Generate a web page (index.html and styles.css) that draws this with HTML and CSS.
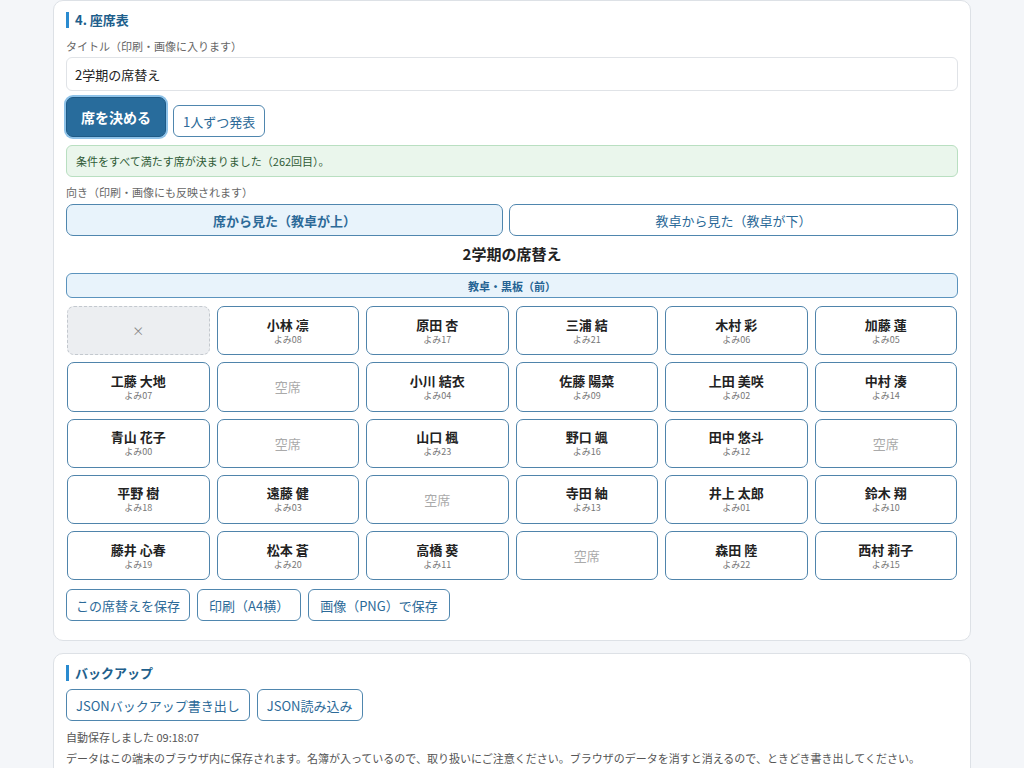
FILE: index.html
```html
<!DOCTYPE html>
<html lang="ja">
<head>
<meta charset="utf-8">
<title>座席表</title>
<link rel="stylesheet" href="styles.css">
</head>
<body>
<main class="page">
  <section class="card">
    <h2 class="sec-title">4. 座席表</h2>
    <label class="field-label title-label">タイトル（印刷・画像に入ります）</label>
    <input class="text-input" type="text" value="2学期の席替え">
    <div class="btn-row main-actions">
      <button class="btn btn-primary">席を決める</button>
      <button class="btn">1人ずつ発表</button>
    </div>
    <div class="alert-ok">条件をすべて満たす席が決まりました（262回目）。</div>
    <div class="field-label orient-label">向き（印刷・画像にも反映されます）</div>
    <div class="toggle">
      <button class="toggle-btn active">席から見た（教卓が上）</button>
      <button class="toggle-btn">教卓から見た（教卓が下）</button>
    </div>
    <h3 class="chart-title">2学期の席替え</h3>
    <div class="desk">教卓・黒板（前）</div>
    <div class="grid">
      <div class="seat blocked">×</div>
      <div class="seat"><span class="nm">小林 凛</span><span class="yo">よみ08</span></div>
      <div class="seat"><span class="nm">原田 杏</span><span class="yo">よみ17</span></div>
      <div class="seat"><span class="nm">三浦 結</span><span class="yo">よみ21</span></div>
      <div class="seat"><span class="nm">木村 彩</span><span class="yo">よみ06</span></div>
      <div class="seat"><span class="nm">加藤 蓮</span><span class="yo">よみ05</span></div>

      <div class="seat"><span class="nm">工藤 大地</span><span class="yo">よみ07</span></div>
      <div class="seat empty">空席</div>
      <div class="seat"><span class="nm">小川 結衣</span><span class="yo">よみ04</span></div>
      <div class="seat"><span class="nm">佐藤 陽菜</span><span class="yo">よみ09</span></div>
      <div class="seat"><span class="nm">上田 美咲</span><span class="yo">よみ02</span></div>
      <div class="seat"><span class="nm">中村 湊</span><span class="yo">よみ14</span></div>

      <div class="seat"><span class="nm">青山 花子</span><span class="yo">よみ00</span></div>
      <div class="seat empty">空席</div>
      <div class="seat"><span class="nm">山口 楓</span><span class="yo">よみ23</span></div>
      <div class="seat"><span class="nm">野口 颯</span><span class="yo">よみ16</span></div>
      <div class="seat"><span class="nm">田中 悠斗</span><span class="yo">よみ12</span></div>
      <div class="seat empty">空席</div>

      <div class="seat"><span class="nm">平野 樹</span><span class="yo">よみ18</span></div>
      <div class="seat"><span class="nm">遠藤 健</span><span class="yo">よみ03</span></div>
      <div class="seat empty">空席</div>
      <div class="seat"><span class="nm">寺田 紬</span><span class="yo">よみ13</span></div>
      <div class="seat"><span class="nm">井上 太郎</span><span class="yo">よみ01</span></div>
      <div class="seat"><span class="nm">鈴木 翔</span><span class="yo">よみ10</span></div>

      <div class="seat"><span class="nm">藤井 心春</span><span class="yo">よみ19</span></div>
      <div class="seat"><span class="nm">松本 蒼</span><span class="yo">よみ20</span></div>
      <div class="seat"><span class="nm">高橋 葵</span><span class="yo">よみ11</span></div>
      <div class="seat empty">空席</div>
      <div class="seat"><span class="nm">森田 陸</span><span class="yo">よみ22</span></div>
      <div class="seat"><span class="nm">西村 莉子</span><span class="yo">よみ15</span></div>
    </div>
    <div class="btn-row bottom-actions">
      <button class="btn">この席替えを保存</button>
      <button class="btn btn-wide">印刷（A4横）</button>
      <button class="btn btn-wide">画像（PNG）で保存</button>
    </div>
  </section>

  <section class="card">
    <h2 class="sec-title">バックアップ</h2>
    <div class="btn-row backup-actions">
      <button class="btn">JSONバックアップ書き出し</button>
      <button class="btn">JSON読み込み</button>
    </div>
    <p class="note">自動保存しました 09:18:07</p>
    <p class="note">データはこの端末のブラウザ内に保存されます。名簿が入っているので、取り扱いにご注意ください。ブラウザのデータを消すと消えるので、ときどき書き出してください。</p>
  </section>
</main>
</body>
</html>
```

FILE: styles.css
```css
* { box-sizing: border-box; }

html, body {
  margin: 0;
  padding: 0;
  background: #f4f6f9;
  font-family: "Noto Sans CJK JP", "Noto Sans", sans-serif;
  color: #222;
}

.page {
  width: 918px;
  margin: 0 auto;
  padding: 0 0 20px;
  display: flex;
  flex-direction: column;
  gap: 12px;
}

.card {
  background: #fff;
  border: 1px solid #dde1e6;
  border-radius: 10px;
  padding: 11px 12px 19px;
  display: flex;
  flex-direction: column;
}

.sec-title {
  margin: 0;
  font-size: 13px;
  line-height: 16px;
  font-weight: 700;
  color: #1e5f8c;
  border-left: 3px solid #2a8bd0;
  padding-left: 6px;
}

.field-label {
  display: block;
  margin-top: 9px;
  font-size: 11px;
  line-height: 16px;
  color: #666;
}

.title-label { margin-top: 10px; }

.text-input {
  margin-top: 3px;
  height: 34px;
  width: 100%;
  border: 1px solid #e0e3e7;
  border-radius: 6px;
  padding: 0 8px;
  font-family: inherit;
  font-size: 13px;
  color: #222;
  background: #fff;
}

.btn-row {
  display: flex;
  align-items: flex-end;
  gap: 7px;
}

.main-actions { margin-top: 6px; }
.bottom-actions { margin-top: 9px; }
.backup-actions { margin-top: 8px; }

.btn {
  height: 32px;
  padding: 0 9px;
  border: 1px solid #4f86ae;
  border-radius: 6px;
  background: #fff;
  color: #2c6a98;
  font-family: inherit;
  font-size: 13px;
  line-height: 1;
}

.btn-wide { padding: 0 11px; }

.btn-primary {
  height: 40px;
  width: 100px;
  padding: 0;
  background: #286c9c;
  color: #fff;
  font-size: 14px;
  font-weight: 700;
  border: 1px solid #1e5a86;
  box-shadow: 0 0 0 2px #8ec2e8;
  border-radius: 7px;
}

.alert-ok {
  margin-top: 8px;
  height: 32px;
  display: flex;
  align-items: center;
  padding: 0 9px;
  background: #eaf6ec;
  border: 1px solid #b9dfc1;
  border-radius: 6px;
  color: #2f5b36;
  font-size: 11px;
}

.orient-label { margin-top: 7px; }

.toggle {
  margin-top: 4px;
  display: grid;
  grid-template-columns: 437px 1fr;
  gap: 6px;
}

.toggle-btn {
  height: 32px;
  border: 1px solid #4f86ae;
  border-radius: 7px;
  background: #fff;
  color: #2c6a98;
  font-family: inherit;
  font-size: 13px;
}

.toggle-btn.active {
  background: #e8f3fb;
  font-weight: 700;
}

.chart-title {
  margin: 8px 0 0;
  text-align: center;
  font-size: 15px;
  line-height: 20px;
  font-weight: 700;
  color: #222;
}

.desk {
  margin-top: 9px;
  height: 25px;
  display: flex;
  align-items: center;
  justify-content: center;
  background: #e8f3fb;
  border: 1px solid #5b93bd;
  border-radius: 6px;
  color: #256393;
  font-size: 11px;
  font-weight: 700;
}

.grid {
  margin-top: 8px;
  padding: 0 1px;
  display: grid;
  grid-template-columns: repeat(6, 1fr);
  column-gap: 7px;
  row-gap: 7px;
}

.seat {
  height: 49.25px;
  border: 1px solid #4f84ab;
  border-radius: 7px;
  background: #fff;
  display: flex;
  flex-direction: column;
  align-items: center;
  justify-content: center;
}

.seat .nm {
  font-size: 13px;
  line-height: 17px;
  font-weight: 700;
  color: #222;
}

.seat .yo {
  margin-top: 1px;
  font-size: 9px;
  line-height: 12px;
  color: #777;
}

.seat.empty {
  font-size: 13px;
  color: #aaa;
}

.seat.blocked {
  background: #eceef1;
  border: 1px dashed #c3c8ce;
  color: #888;
  font-size: 12px;
}

.note {
  margin: 8px 0 0;
  font-size: 11px;
  line-height: 16px;
  color: #555;
}

.note + .note { margin-top: 5px; }
```
